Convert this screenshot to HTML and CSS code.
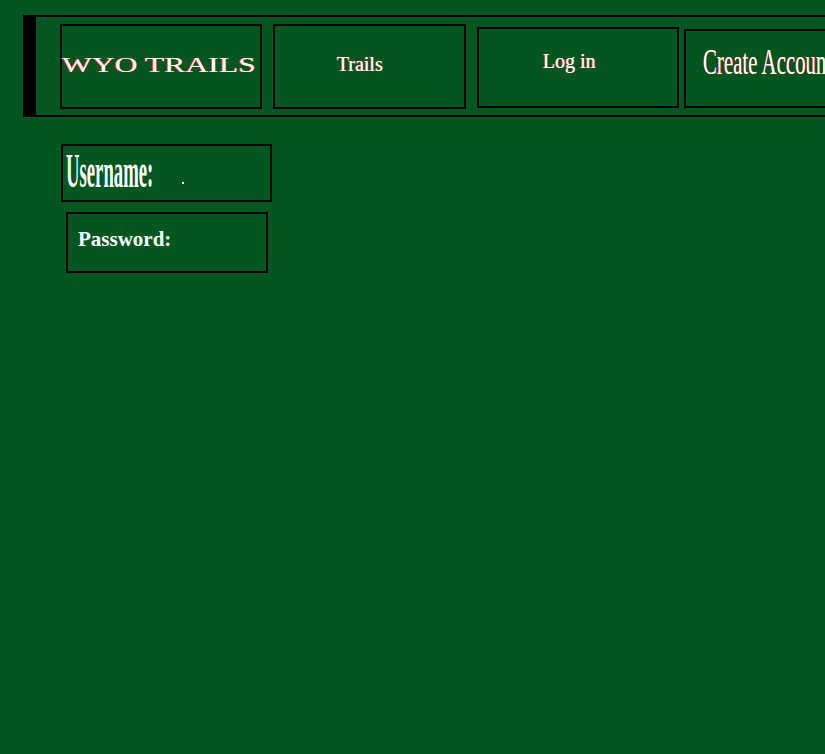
FILE: index.html
```html
<!DOCTYPE html>
<html lang="en">
<head>
<meta charset="utf-8">
<title>WYO Trails - Log in</title>
<link rel="stylesheet" href="styles.css">
</head>
<body>
  <header class="topbar">
    <nav class="nav">
      <div class="nav-box brand"><span class="brand-text">WYO TRAILS</span></div>
      <div class="nav-box trails"><span class="nav-text">Trails</span></div>
      <div class="nav-box login"><span class="nav-text">Log in</span></div>
      <div class="nav-box create"><span class="create-text">Create Account</span></div>
    </nav>
  </header>
  <main class="form">
    <div class="field username"><span class="user-label">Username:</span><span class="dot"></span></div>
    <div class="field password"><span class="pass-label">Password:</span></div>
  </main>
</body>
</html>
```
FILE: styles.css
```css
html {
  overflow: hidden;
  background: #03561f;
}
body {
  margin: 0;
  background: #03561f;
  font-family: "Liberation Serif", "Times New Roman", serif;
  color: #fff;
}
.topbar {
  margin: 15px 0 0 23px;
  width: 900px;
  height: 102px;
  box-sizing: border-box;
  border: 2px solid #000;
  border-left: 13px solid #000;
}
.nav {
  display: flex;
  align-items: flex-start;
  padding-left: 24px;
}
.nav-box {
  box-sizing: border-box;
  border: 2px solid #000;
  flex: none;
}
.brand {
  width: 202px;
  height: 85px;
  margin-top: 7px;
  padding-top: 28px;
}
.trails {
  width: 193px;
  height: 85px;
  margin: 7px 0 0 11px;
  padding: 28px 0 0 62px;
}
.login {
  width: 202px;
  height: 81px;
  margin: 10px 0 0 11px;
  padding: 22px 0 0 64px;
}
.create {
  width: 200px;
  height: 79px;
  margin: 12px 0 0 5px;
  padding: 13px 0 0 17px;
  white-space: nowrap;
}
.brand-text {
  display: inline-block;
  font-size: 22px;
  line-height: 1;
  white-space: nowrap;
  transform: scaleX(1.44);
  transform-origin: left top;
  color: #fff;
  text-shadow: -1px 0 0 #ff2b2b;
}
.nav-text {
  display: inline-block;
  font-size: 20px;
  line-height: 1;
  white-space: nowrap;
  color: #fff;
  text-shadow: -1px 0 0 #ff5a5a;
}
.create-text {
  display: inline-block;
  font-size: 36px;
  line-height: 1;
  transform: scaleX(0.58);
  transform-origin: left top;
  color: #fff;
  text-shadow: -1px 0 0 #ff2b2b;
}
.form {
  padding-top: 27px;
}
.field {
  box-sizing: border-box;
  border: 2px solid #000;
}
.username {
  margin-left: 61px;
  width: 211px;
  height: 58px;
  padding: 1px 0 0 3px;
  position: relative;
}
.user-label {
  display: inline-block;
  font-size: 48px;
  font-weight: bold;
  line-height: 1;
  white-space: nowrap;
  transform: scaleX(0.39);
  transform-origin: left top;
}
.dot {
  position: absolute;
  left: 119px;
  top: 36px;
  width: 2px;
  height: 2px;
  background: #fff;
}
.password {
  margin: 10px 0 0 66px;
  width: 202px;
  height: 61px;
  padding: 15px 0 0 10px;
}
.pass-label {
  display: inline-block;
  font-size: 21px;
  font-weight: bold;
  line-height: 1;
}
```
